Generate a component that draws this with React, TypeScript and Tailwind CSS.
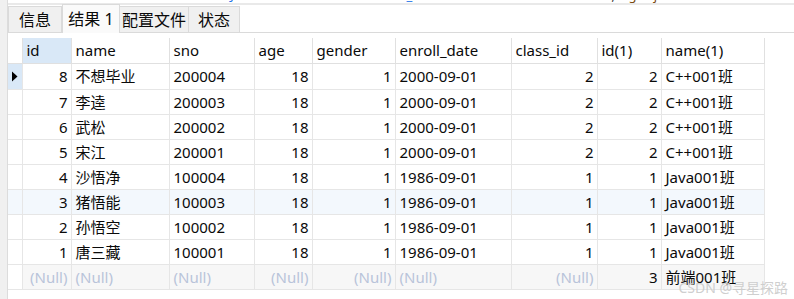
import React from "react";

type Row = {
  id: number;
  name: string;
  sno: string;
  age: number;
  gender: number;
  enroll: string;
  classId: number;
  id1: number;
  name1: string;
};

const rows: Row[] = [
  { id: 8, name: "不想毕业", sno: "200004", age: 18, gender: 1, enroll: "2000-09-01", classId: 2, id1: 2, name1: "C++001班" },
  { id: 7, name: "李逵", sno: "200003", age: 18, gender: 1, enroll: "2000-09-01", classId: 2, id1: 2, name1: "C++001班" },
  { id: 6, name: "武松", sno: "200002", age: 18, gender: 1, enroll: "2000-09-01", classId: 2, id1: 2, name1: "C++001班" },
  { id: 5, name: "宋江", sno: "200001", age: 18, gender: 1, enroll: "2000-09-01", classId: 2, id1: 2, name1: "C++001班" },
  { id: 4, name: "沙悟净", sno: "100004", age: 18, gender: 1, enroll: "1986-09-01", classId: 1, id1: 1, name1: "Java001班" },
  { id: 3, name: "猪悟能", sno: "100003", age: 18, gender: 1, enroll: "1986-09-01", classId: 1, id1: 1, name1: "Java001班" },
  { id: 2, name: "孙悟空", sno: "100002", age: 18, gender: 1, enroll: "1986-09-01", classId: 1, id1: 1, name1: "Java001班" },
  { id: 1, name: "唐三藏", sno: "100001", age: 18, gender: 1, enroll: "1986-09-01", classId: 1, id1: 1, name1: "Java001班" },
];

// 列宽（含边框）
const cols = [
  { key: "id", label: "id", w: "w-[49px]" },
  { key: "name", label: "name", w: "w-[98px]" },
  { key: "sno", label: "sno", w: "w-[85px]" },
  { key: "age", label: "age", w: "w-[58px]" },
  { key: "gender", label: "gender", w: "w-[83px]" },
  { key: "enroll", label: "enroll_date", w: "w-[116px]" },
  { key: "classId", label: "class_id", w: "w-[86px]" },
  { key: "id1", label: "id(1)", w: "w-[64px]" },
  { key: "name1", label: "name(1)", w: "w-[103px]" },
];

const tabs = [
  { label: "信息", w: "w-[54px]" },
  { label: "结果 1", w: "w-[58px]", active: true },
  { label: "配置文件", w: "w-[70px]" },
  { label: "状态", w: "w-[52px]" },
];

const cell = "h-[25px] border-r border-b border-[#e6e6e6] px-[4px] whitespace-nowrap overflow-hidden";
const num = cell + " text-right pr-[3px]";
const nul = "text-[#b9c4da]";

export default function App() {
  return (
    <div
      className="relative flex w-[794px] h-[299px] overflow-hidden bg-white text-[15px] text-[#0a0a0a]"
      style={{ fontFamily: '"Noto Sans", "Noto Sans CJK SC", sans-serif' }}
    >
      {/* 左侧灰条 */}
      <div className="w-[8px] shrink-0 bg-[#f0f0f0] border-r border-[#dcdcdc]" />

      <div className="flex-1 flex flex-col">
        {/* 被截掉的 SQL 行 */}
        <div className="h-[3px] overflow-hidden text-[13px] leading-[13px] bg-white">
          <div className="-mt-[11px] pl-[10px] whitespace-nowrap tracking-wide">
            <span className="text-[#7a4a10]">SELECT </span>
            <span className="text-[#1a73e8]">student.</span>
            <span className="text-[#333]"> * </span>
            <span className="text-[#7a4a10]">FROM </span>
            <span className="text-[#333]">student </span>
            <span className="text-[#1a73e8]">JOIN</span>
            <span className="text-[#333]"> class </span>
            <span className="text-[#7a4a10]">ON </span>
            <span className="text-[#1a73e8]">student.class_id</span>
            <span className="text-[#333]"> = class.id </span>
            <span className="text-[#7a4a10]">ORDER BY </span>
            <span className="text-[#1a73e8]">id</span>
            <span className="text-[#333]"> DESC ; </span>
            <span className="text-[#7a4a10]">right join</span>
          </div>
        </div>
        <div className="h-[2px] bg-[#e9e9e9]" />

        {/* 标签栏 */}
        <div className="h-[28px] flex items-end border-b border-[#dadada]">
          {tabs.map((t) =>
            t.active ? (
              <div
                key={t.label}
                className={`${t.w} h-[29px] -mb-px flex items-center justify-center bg-[#fafafa] border border-b-0 border-[#dadada] text-[16px]`}
              >
                {t.label}
              </div>
            ) : (
              <div
                key={t.label}
                className={`${t.w} h-[26px] flex items-center justify-center bg-[#f0f0f0] border-l border-t border-r border-[#dadada] -ml-px first:ml-0 text-[16px]`}
              >
                {t.label}
              </div>
            )
          )}
        </div>

        <div className="h-[5px]" />

        {/* 结果表格 */}
        <table className="table-fixed border-collapse w-[756px] leading-[24px]">
          <thead>
            <tr>
              <th className="w-[14px] h-[25px] border-r border-b border-[#e0e0e0]" />
              {cols.map((c) => (
                <th
                  key={c.key}
                  className={`${c.w} h-[25px] border-r border-b border-[#e0e0e0] px-[4px] text-left font-normal ${
                    c.key === "id" ? "bg-[#d9e8f7]" : ""
                  }`}
                >
                  {c.label}
                </th>
              ))}
            </tr>
          </thead>
          <tbody>
            {rows.map((r, i) => (
              <tr key={r.id} className={r.id === 3 ? "bg-[#f3f8fd]" : ""}>
                <td className={`h-[25px] border-r border-b border-[#e6e6e6] p-0 ${i === 0 ? "bg-[#d9e8f7]" : ""}`}>
                  {i === 0 && (
                    <svg width="14" height="25" viewBox="0 0 14 25" className="block">
                      <path d="M4 7.5 L9.5 12.5 L4 17.5 Z" fill="#000" />
                    </svg>
                  )}
                </td>
                <td className={num}>{r.id}</td>
                <td className={cell}>{r.name}</td>
                <td className={cell}>{r.sno}</td>
                <td className={num}>{r.age}</td>
                <td className={num}>{r.gender}</td>
                <td className={cell}>{r.enroll}</td>
                <td className={num}>{r.classId}</td>
                <td className={num}>{r.id1}</td>
                <td className={cell}>{r.name1}</td>
              </tr>
            ))}
            <tr className="bg-[#f7f7f7]">
              <td className="h-[25px] border-r border-b border-[#e6e6e6] p-0 bg-white" />
              <td className={`${num} ${nul}`}>(Null)</td>
              <td className={`${cell} ${nul}`}>(Null)</td>
              <td className={`${cell} ${nul}`}>(Null)</td>
              <td className={`${num} ${nul}`}>(Null)</td>
              <td className={`${num} ${nul}`}>(Null)</td>
              <td className={`${cell} ${nul}`}>(Null)</td>
              <td className={`${num} ${nul}`}>(Null)</td>
              <td className={num}>3</td>
              <td className={cell}>前端001班</td>
            </tr>
          </tbody>
        </table>
      </div>

      {/* 水印 */}
      <div className="absolute right-[6px] bottom-[1px] text-[14px] text-[#c9c9c9]/90 pointer-events-none">
        CSDN @寻星探路
      </div>
    </div>
  );
}
